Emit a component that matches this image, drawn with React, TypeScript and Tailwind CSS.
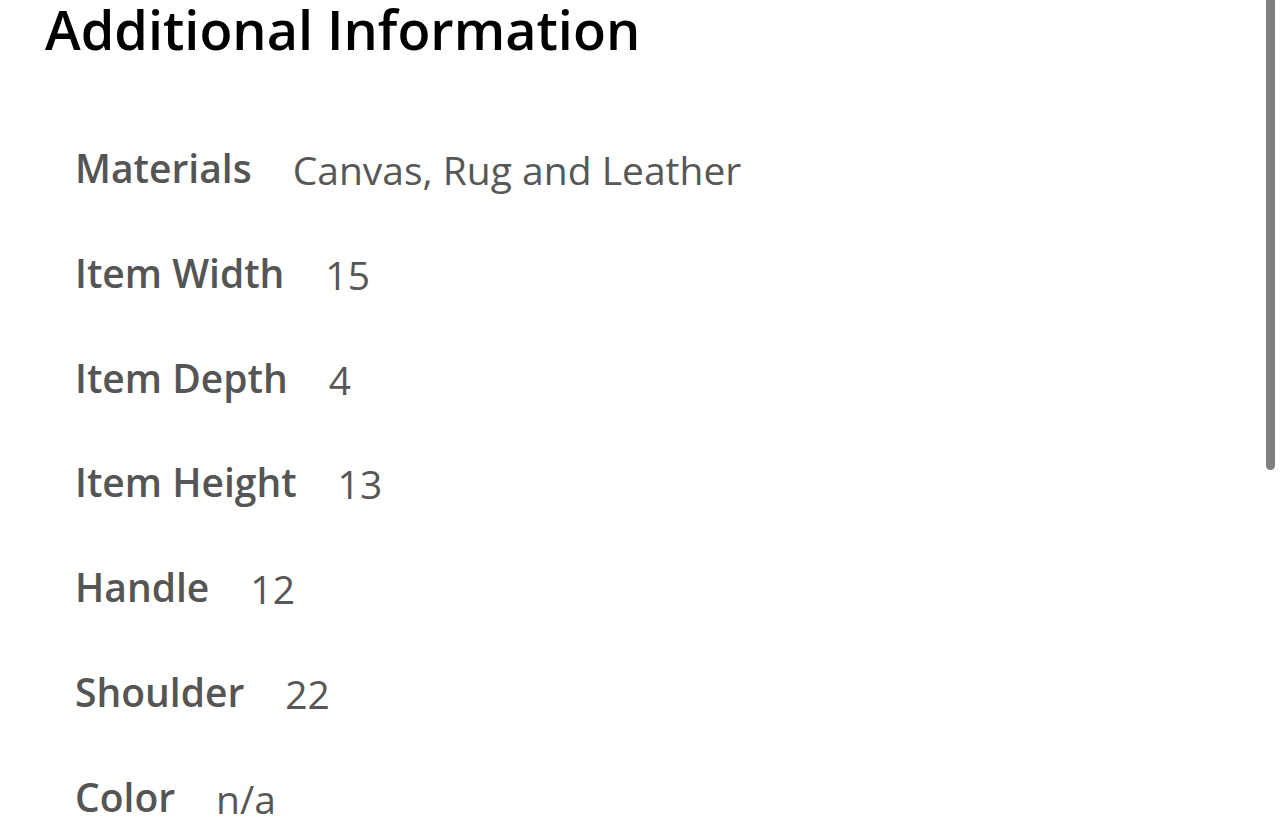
import React from "react";

const rows: [string, string][] = [
  ["Materials", "Canvas, Rug and Leather"],
  ["Item Width", "15"],
  ["Item Depth", "4"],
  ["Item Height", "13"],
  ["Handle", "12"],
  ["Shoulder", "22"],
  ["Color", "n/a"],
];

export default function App() {
  return (
    <div
      className="relative w-[1284px] h-[826px] overflow-hidden bg-white"
      style={{ fontFamily: '"Open Sans", "Liberation Sans", sans-serif' }}
    >
      <h1 className="pl-[45px] text-[54px] leading-[58px] font-semibold text-black">
        Additional Information
      </h1>
      <div className="pl-[75px] pt-[90px]">
        {rows.map(([label, value]) => (
          <div key={label} className="flex items-start gap-[41px] h-[104.8px]">
            <div className="text-[39px] leading-[40px] font-semibold text-[#555555]">
              {label}
            </div>
            <div className="mt-[2px] text-[39px] leading-[40px] font-normal text-[#575757]">
              {value}
            </div>
          </div>
        ))}
      </div>
      <div className="absolute right-[9px] top-0 w-[9px] h-[470px] rounded-b-full bg-[#808080]" />
    </div>
  );
}
